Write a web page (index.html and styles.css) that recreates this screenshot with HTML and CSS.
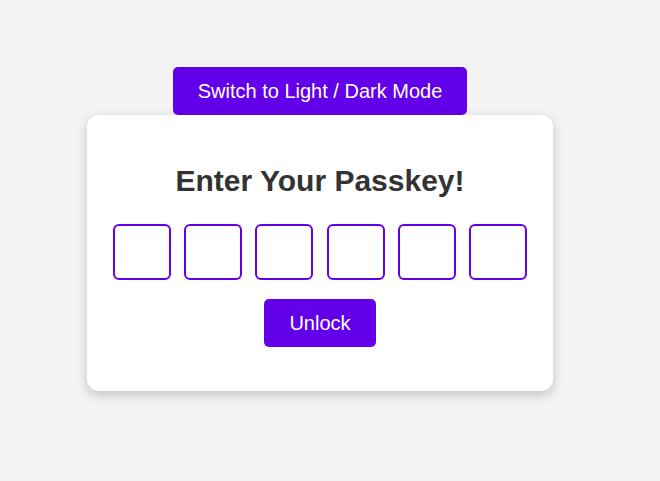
FILE: index.html
```html
<!DOCTYPE html>
<html lang="en">
<head>
<meta charset="utf-8">
<title>Passkey</title>
<link rel="stylesheet" href="styles.css">
</head>
<body>
<main class="page">
  <button class="btn btn-toggle" type="button">Switch to Light / Dark Mode</button>
  <section class="card">
    <h2 class="title">Enter Your Passkey!</h2>
    <div class="code-row">
      <input class="code-box" type="text" maxlength="1">
      <input class="code-box" type="text" maxlength="1">
      <input class="code-box" type="text" maxlength="1">
      <input class="code-box" type="text" maxlength="1">
      <input class="code-box" type="text" maxlength="1">
      <input class="code-box" type="text" maxlength="1">
    </div>
    <button class="btn btn-unlock" type="button">Unlock</button>
  </section>
</main>
</body>
</html>
```
FILE: styles.css
```css
html, body {
  margin: 0;
  padding: 0;
}
body {
  background: #f3f3f3;
  font-family: "Liberation Sans", Arial, sans-serif;
  color: #333;
}
.page {
  box-sizing: border-box;
  min-height: 100vh;
  display: flex;
  flex-direction: column;
  align-items: center;
  padding: 67px 20px 0 0;
}
.btn {
  font-family: "Liberation Sans", Arial, sans-serif;
  font-size: 20px;
  line-height: 24px;
  padding: 12px 25px;
  border: none;
  border-radius: 5px;
  background: #6200ea;
  color: #fff;
  cursor: pointer;
}
.card {
  box-sizing: border-box;
  width: 466px;
  height: 276px;
  background: #fff;
  border-radius: 12px;
  box-shadow: 0 4px 12px rgba(0, 0, 0, 0.2);
  display: flex;
  flex-direction: column;
  align-items: center;
  padding-top: 49px;
}
.title {
  margin: 0;
  font-size: 30px;
  line-height: 34.5px;
  font-weight: bold;
  color: #333;
}
.code-row {
  display: flex;
  gap: 13.4px;
  margin-top: 25.5px;
}
.code-box {
  width: 50px;
  height: 50px;
  padding: 1px 2px;
  border: 2px solid #6200ea;
  border-radius: 6px;
  background: #fff;
  font-size: 24px;
  text-align: center;
  outline: none;
}
.btn-unlock {
  margin-top: 19px;
}
```
